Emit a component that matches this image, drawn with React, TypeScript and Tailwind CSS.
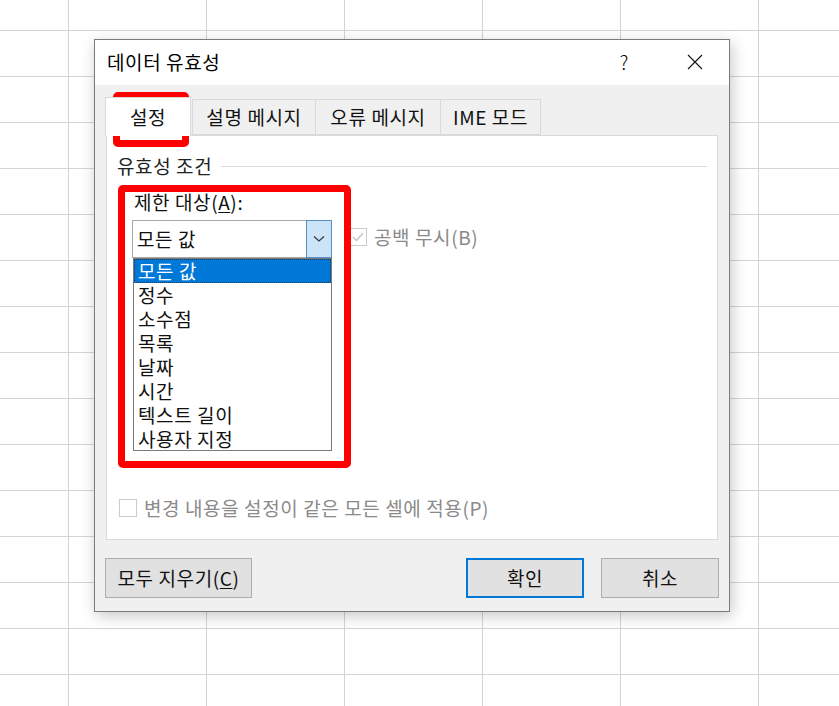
import React from "react";

const listItems = ["모든 값", "정수", "소수점", "목록", "날짜", "시간", "텍스트 길이", "사용자 지정"];

function SheetGrid() {
  const cells = Array.from({ length: 7 * 16 });
  return (
    <div className="grid grid-cols-[68px_repeat(6,137px)] grid-rows-[30px_repeat(15,45px)] gap-px bg-[#d4d4d4] w-[900px]">
      {cells.map((_, i) => (
        <div key={i} className="bg-white" />
      ))}
    </div>
  );
}

function Dialog() {
  return (
    <div className="absolute left-[94px] top-[39px] w-[636px] h-[573px] border border-[#7a7a7a] bg-[#f0f0f0] shadow-[2px_4px_14px_rgba(0,0,0,0.22)] flex flex-col">
      {/* title bar */}
      <div className="h-[45px] bg-white flex items-center pl-[12px] pr-[26px]">
        <span className="text-[19px] leading-[24px] text-black flex-1 -mt-[2px]">데이터 유효성</span>
        <span className="text-[19px] leading-[24px] text-black font-light mr-[58px] -mt-[2px]">?</span>
        <svg width="16" height="16" viewBox="0 0 16 16" className="-mt-[1px]">
          <path d="M1 1 L15 15 M15 1 L1 15" stroke="#111" strokeWidth="1.1" fill="none" />
        </svg>
      </div>

      {/* body */}
      <div className="flex-1 flex flex-col px-[11px] pt-[12px] pb-[13px]">
        {/* tabs */}
        <div className="flex items-end h-[38px] -ml-px">
          <div className="relative z-10 h-[39px] -mb-px w-[86px] bg-white border border-b-0 border-[#d9d9d9] flex items-center justify-center text-[19px] text-[#111]">
            설정
          </div>
          <div className="h-[36px] w-[124px] ml-[1px] bg-[#f0f0f0] border border-[#d9d9d9] flex items-center justify-center text-[19px] text-[#111]">
            설명 메시지
          </div>
          <div className="h-[36px] w-[126px] -ml-px bg-[#f0f0f0] border border-[#d9d9d9] flex items-center justify-center text-[19px] text-[#111]">
            오류 메시지
          </div>
          <div className="h-[36px] w-[101px] -ml-px bg-[#f0f0f0] border border-[#d9d9d9] flex items-center justify-center text-[19px] text-[#111]">
            IME 모드
          </div>
        </div>

        {/* panel */}
        <div className="h-[405px] bg-white border border-[#d9d9d9] flex flex-col">
          <div className="mt-[18px] h-[24px] flex items-center pl-[10px] pr-[10px]">
            <span className="text-[19px] leading-[24px] text-[#222]">유효성 조건</span>
            <div className="flex-1 h-px bg-[#dcdcdc] ml-[9px]" />
          </div>

          <div className="mt-[12px] h-[24px] pl-[27px] text-[19px] leading-[24px] text-[#111]">
            제한 대상(<span className="underline underline-offset-2">A</span>):
          </div>

          <div className="mt-[6px] pl-[25px] flex items-start">
            <div className="flex flex-col w-[200px]">
              <div className="h-[38px] border border-[#a8a8a8] flex bg-white">
                <div className="flex-1 pl-[4px] flex items-center text-[19px] text-[#111]">모든 값</div>
                <div className="w-[26px] -my-px -mr-px bg-[#cce4f7] border border-[#5b8fc4] flex items-center justify-center">
                  <svg width="12" height="8" viewBox="0 0 12 8">
                    <path d="M1 1.5 L6 6 L11 1.5" stroke="#333" strokeWidth="1.2" fill="none" />
                  </svg>
                </div>
              </div>
              <div className="ml-px h-[193px] border border-[#7a7a7a] bg-white flex flex-col">
                {listItems.map((item, i) => (
                  <div
                    key={item}
                    className={
                      i === 0
                        ? "h-[24px] leading-[22px] pl-[3px] text-[19px] bg-[#0078d7] text-white border border-dotted border-[#2a3a4a]"
                        : "h-[24px] leading-[24px] pl-[4px] text-[19px] text-[#111]"
                    }
                  >
                    {item}
                  </div>
                ))}
              </div>
            </div>
            <div className="ml-[17px] mt-[5px] flex items-center">
              <div className="w-[18px] h-[18px] border border-[#cccccc] bg-white flex items-center justify-center">
                <svg width="14" height="12" viewBox="0 0 14 12">
                  <path d="M2 6 L5.5 9.5 L12 2" stroke="#c4c4c4" strokeWidth="1.4" fill="none" />
                </svg>
              </div>
              <span className="ml-[7px] text-[19px] leading-[24px] text-[#8a8a8a]">공백 무시(B)</span>
            </div>
          </div>

          <div className="mt-auto mb-[19px] pl-[12px] h-[24px] flex items-center">
            <div className="w-[18px] h-[18px] border border-[#cccccc] bg-white" />
            <span className="ml-[7px] text-[19px] leading-[24px] text-[#8a8a8a]">
              변경 내용을 설정이 같은 모든 셀에 적용(P)
            </span>
          </div>
        </div>

        {/* buttons */}
        <div className="mt-[18px] flex items-center -mx-px">
          <div className="h-[40px] w-[147px] bg-[#e1e1e1] border border-[#adadad] flex items-center justify-center text-[19px] text-[#111]">
            모두 지우기(<span className="underline underline-offset-2">C</span>)
          </div>
          <div className="flex-1" />
          <div className="h-[40px] w-[118px] bg-[#e1e1e1] border-2 border-[#0078d7] flex items-center justify-center text-[19px] text-[#111]">
            확인
          </div>
          <div className="ml-[17px] h-[40px] w-[118px] bg-[#e1e1e1] border border-[#adadad] flex items-center justify-center text-[19px] text-[#111]">
            취소
          </div>
        </div>
      </div>
    </div>
  );
}

export default function App() {
  return (
    <div className="relative w-[839px] h-[706px] overflow-hidden bg-white tracking-[0.6px] font-['Noto_Sans_CJK_KR','Noto_Sans',sans-serif]">
      <SheetGrid />
      <Dialog />
      {/* annotation boxes */}
      <div className="absolute left-[113px] top-[92px] w-[76px] h-[55px] border-[7px] border-[#ff0000] rounded-[5px]" />
      <div className="absolute left-[118px] top-[185px] w-[233px] h-[283px] border-[7px] border-[#ff0000] rounded-[5px]" />
    </div>
  );
}
